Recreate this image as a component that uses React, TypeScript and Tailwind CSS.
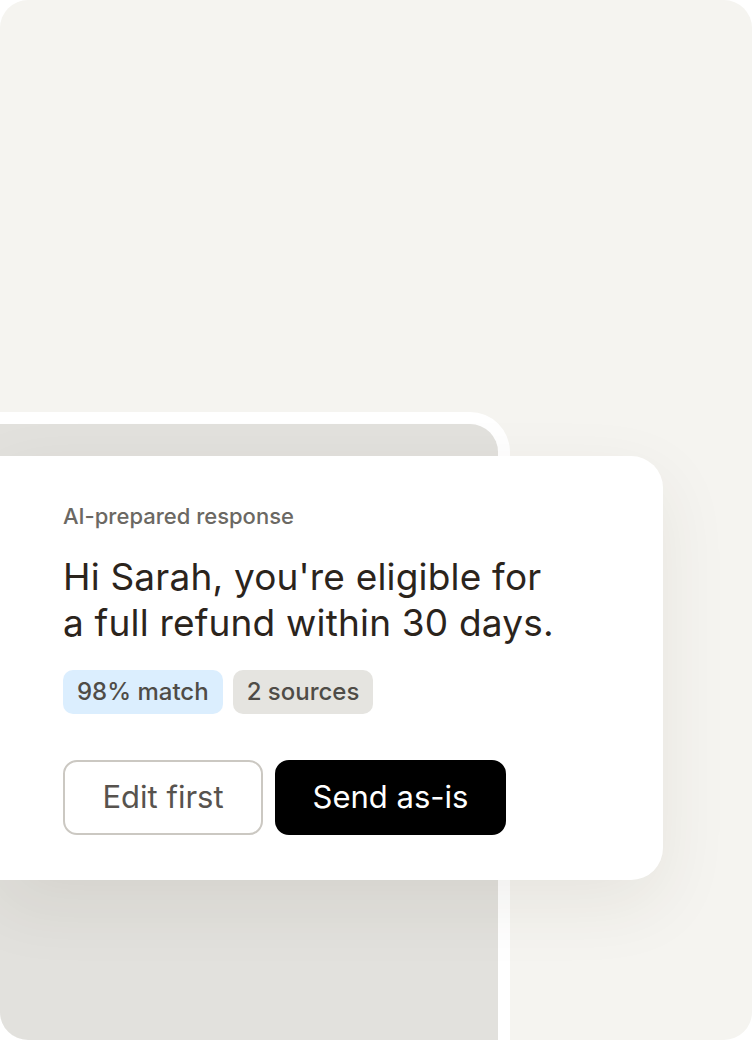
export default function App() {
  return (
    <div
      className="w-[752px] h-[1040px] bg-[#f5f4f0] rounded-[28px] overflow-hidden flex flex-col pt-[412px]"
      style={{ fontFamily: "Inter, 'Noto Sans', sans-serif" }}
    >
      <div className="w-[510px] flex-1 bg-white rounded-tr-[40px] pt-3 pr-3 flex flex-col">
        <div className="flex-1 bg-[#e2e1dd] rounded-tr-[28px] pt-8">
          <div className="w-[663px] h-[424px] bg-white rounded-r-[32px] shadow-[0_24px_70px_rgba(60,50,30,0.08)] pl-[63px] pt-[46px] flex flex-col">
            <div className="text-[22px] leading-[28px] font-medium text-[#6b6863]">
              AI-prepared response
            </div>
            <div className="mt-6 text-[37px] leading-[46px] tracking-[0.005em] text-[#2b241c]">
              Hi Sarah, you're eligible for
              <br />
              a full refund within 30 days.
            </div>
            <div className="mt-6 flex gap-[10px]">
              <span className="h-[44px] px-[14px] rounded-[10px] bg-[#dbeefe] text-[24px] font-medium text-[#4f4c47] flex items-center">
                98% match
              </span>
              <span className="h-[44px] px-[14px] rounded-[10px] bg-[#e5e4e0] text-[24px] font-medium text-[#4f4c47] flex items-center">
                2 sources
              </span>
            </div>
            <div className="mt-[46px] flex gap-3">
              <button className="w-[200px] h-[75px] rounded-[14px] border-2 border-[#cbc8c2] bg-white text-[31px] text-[#57534e]">
                Edit first
              </button>
              <button className="w-[231px] h-[75px] rounded-[14px] bg-black text-[31px] text-white">
                Send as-is
              </button>
            </div>
          </div>
        </div>
      </div>
    </div>
  );
}
